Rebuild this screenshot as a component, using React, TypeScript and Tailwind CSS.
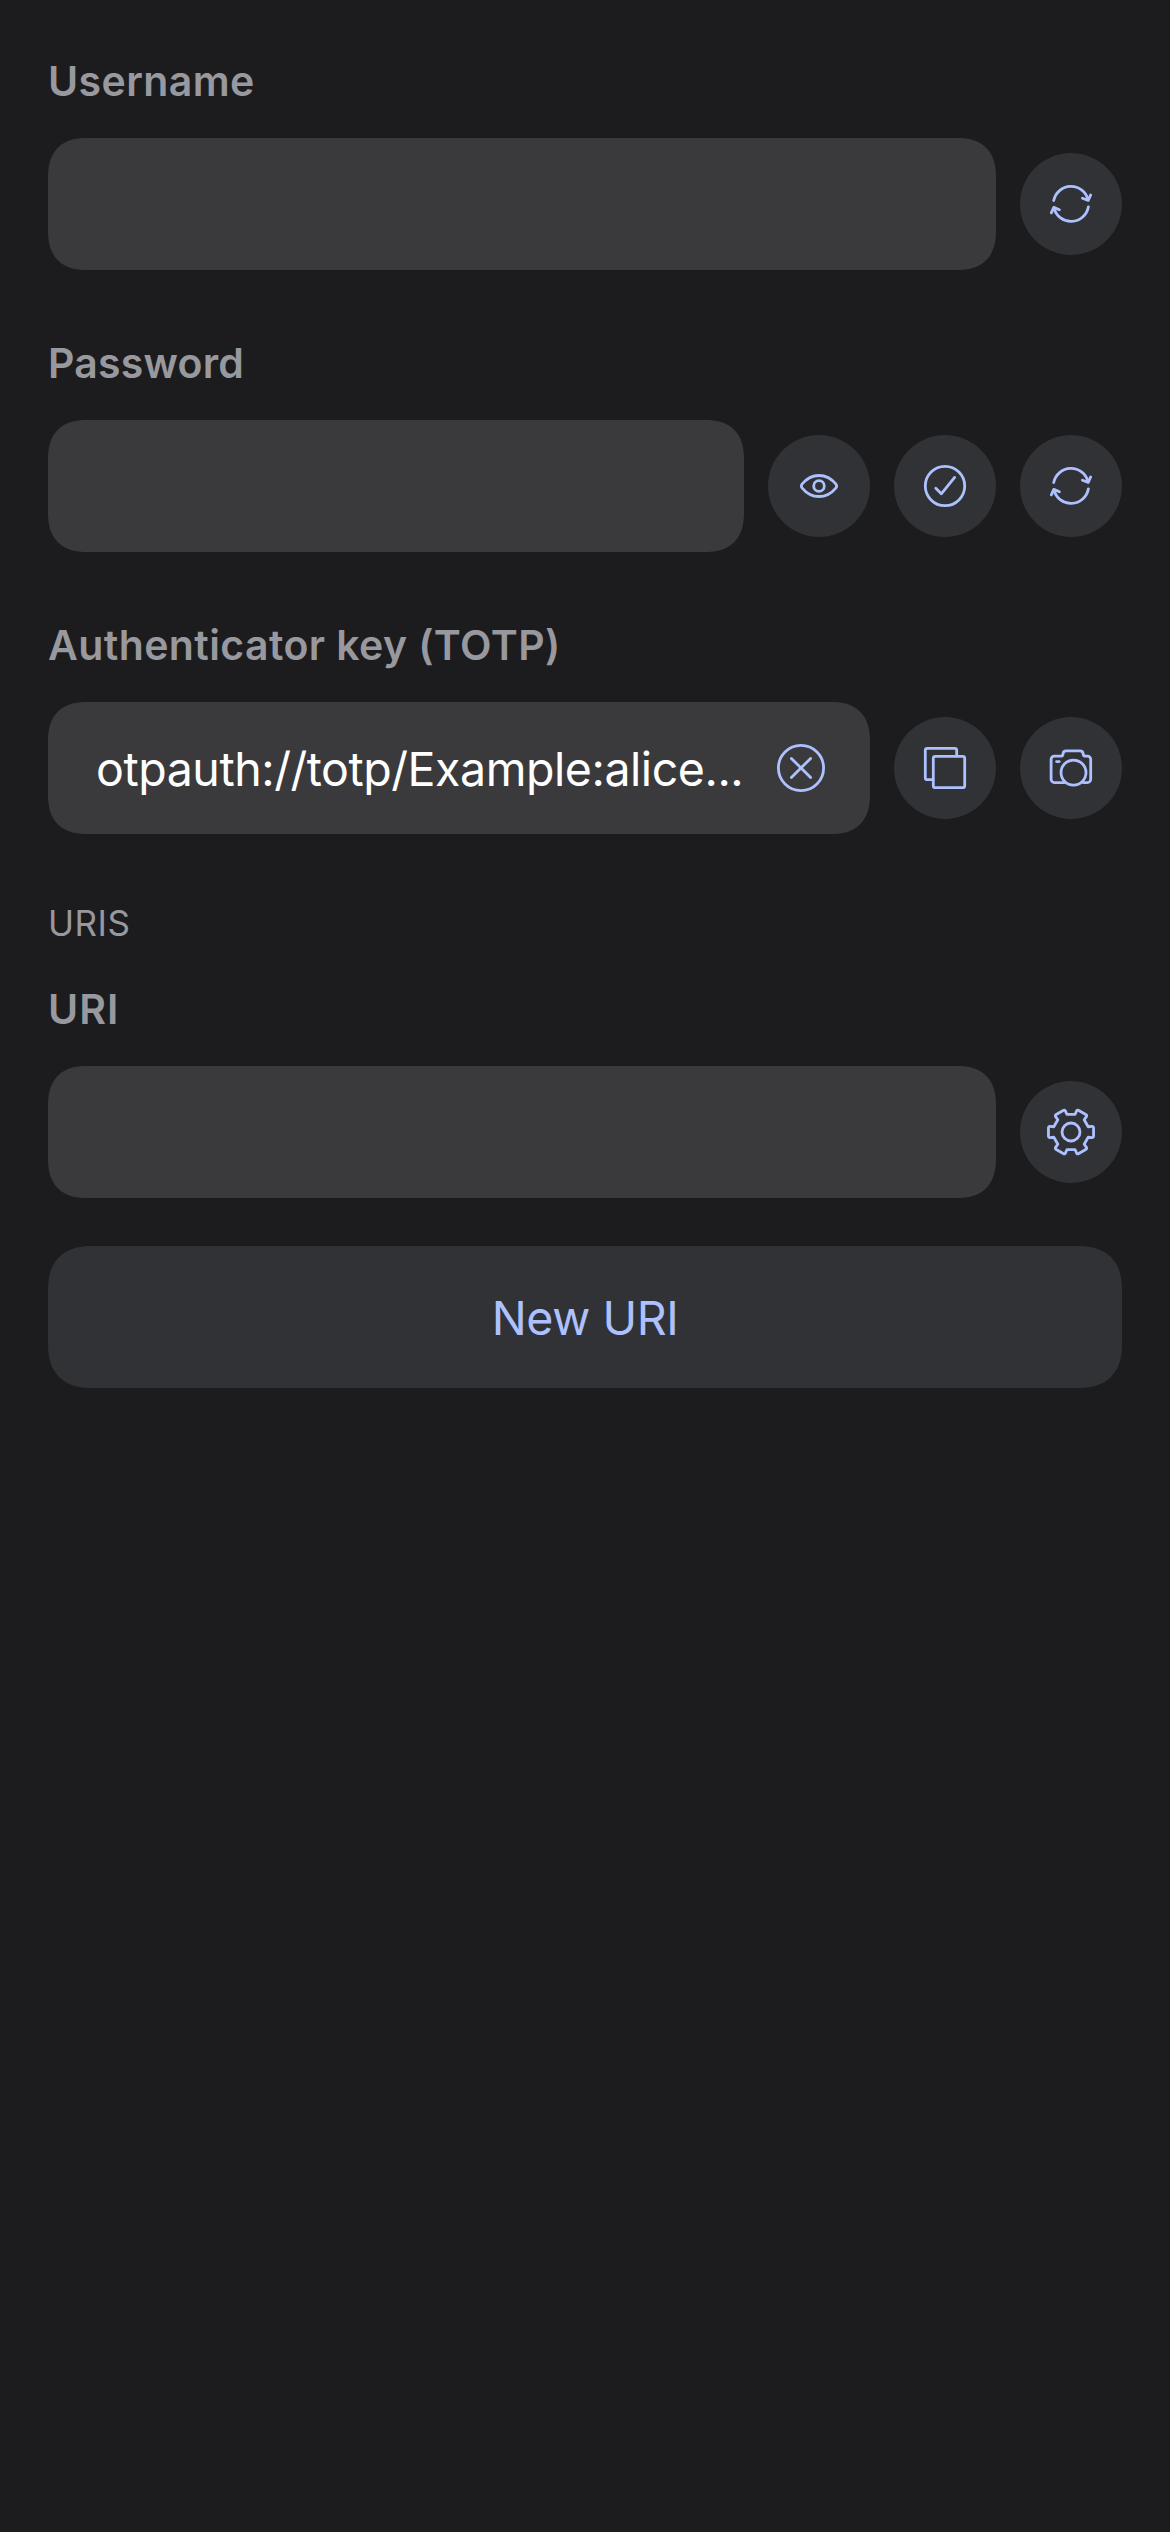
import type { ReactNode } from "react";

function gearPath(cx: number, cy: number) {
  const at = (r: number, deg: number) => {
    const a = (deg * Math.PI) / 180;
    return [cx + r * Math.cos(a), cy + r * Math.sin(a)];
  };
  const fmt = (p: number[]) => `${p[0].toFixed(2)} ${p[1].toFixed(2)}`;
  const mix = (a: number[], b: number[], d: number) => {
    const len = Math.hypot(b[0] - a[0], b[1] - a[1]);
    return [a[0] + ((b[0] - a[0]) * d) / len, a[1] + ((b[1] - a[1]) * d) / len];
  };
  let d = "";
  for (let i = 0; i < 6; i++) {
    const t = i * 60;
    const b1 = at(18, t - 17);
    const c1 = at(23.3, t - 14.5);
    const c2 = at(23.3, t + 14.5);
    const b2 = at(18, t + 17);
    d += `${i === 0 ? "M" : "L"}${fmt(b1)}`;
    d += `L${fmt(mix(c1, b1, 1.8))}Q${fmt(c1)} ${fmt(mix(c1, c2, 1.8))}`;
    d += `L${fmt(mix(c2, c1, 1.8))}Q${fmt(c2)} ${fmt(mix(c2, b2, 1.8))}`;
    d += `L${fmt(b2)}`;
  }
  return d + "Z";
}

function Glyph({ children }: { children: ReactNode }) {
  return (
    <svg
      viewBox="0 0 102 102"
      className="size-full"
      fill="none"
      stroke="currentColor"
      strokeWidth={2.8}
      strokeLinecap="round"
      strokeLinejoin="round"
    >
      {children}
    </svg>
  );
}

const RefreshIcon = () => (
  <Glyph>
    <path d="M33.7 47.6A17.6 17.6 0 0 1 68 46.6" />
    <path d="M62.4 45.2L68.2 47.4L70.7 41.9" />
    <path d="M68.4 53.8A17.6 17.6 0 0 1 34 55.2" />
    <path d="M31.3 59.9L33.8 54.4L39.4 56.7" />
  </Glyph>
);

const EyeIcon = () => (
  <Glyph>
    <path d="M34 49.2C38.4 43.8 44.4 40.5 51 40.5S63.6 43.8 68 49.2Q69.3 51 68 52.8C63.6 58.2 57.6 61.5 51 61.5S38.4 58.2 34 52.8Q32.7 51 34 49.2Z" />
    <circle cx="51" cy="51" r="5.3" />
  </Glyph>
);

const CheckIcon = () => (
  <Glyph>
    <circle cx="51" cy="51" r="19.7" />
    <path d="M41.8 53.2L47.3 58.8L60.6 42.4" />
  </Glyph>
);

const CopyIcon = () => (
  <Glyph>
    <rect x="39.3" y="39.3" width="31.4" height="31.4" rx="2" />
    <path d="M62.7 39V33.3a2 2 0 0 0-2-2H33.3a2 2 0 0 0-2 2V60.7a2 2 0 0 0 2 2H39" />
  </Glyph>
);

const CameraIcon = () => (
  <Glyph>
    <path d="M44.5 65.6H34.4a3.3 3.3 0 0 1-3.3-3.3V42.4a3.3 3.3 0 0 1 3.3-3.3H40.4Q43 39.1 43 36.9Q43.2 33.8 46.2 33.8H60Q63 33.8 63.2 36.9Q63.2 39.1 65.8 39.1H67.4a3.3 3.3 0 0 1 3.3 3.3V62.3a3.3 3.3 0 0 1-3.3 3.3H63.2" />
    <circle cx="53.5" cy="55.6" r="12.5" />
    <path d="M36.6 44.6H39.2" />
  </Glyph>
);

const GearIcon = () => (
  <Glyph>
    <circle cx="51" cy="51" r="9" />
    <path d={gearPath(51, 51)} />
  </Glyph>
);

function IconButton({ label, children }: { label: string; children: ReactNode }) {
  return (
    <button aria-label={label} className="size-[102px] shrink-0 rounded-full bg-[#313236] text-[#aec1ff]">
      {children}
    </button>
  );
}

function Field({
  label,
  spacing,
  children,
  actions,
}: {
  label: string;
  spacing: string;
  children?: ReactNode;
  actions: ReactNode;
}) {
  return (
    <section>
      <h2 className={`h-12 text-[41px] leading-[48px] font-semibold text-[#98989f] ${spacing}`}>{label}</h2>
      <div className="mt-[33px] flex items-center gap-6">
        <div className="flex h-[132px] min-w-0 flex-1 items-center rounded-[40px] bg-[#3a3a3c] pr-[45px] pl-12 [corner-shape:superellipse(1.3)]">
          {children}
        </div>
        {actions}
      </div>
    </section>
  );
}

export default function App() {
  return (
    <main className="flex min-h-[2532px] w-full flex-col bg-[#1c1c1e] px-12 pt-[57px] font-[Inter,sans-serif]">
      <div className="flex flex-col gap-[69px]">
        <Field
          label="Username"
          spacing="tracking-[0.4px]"
          actions={
            <IconButton label="Generate username">
              <RefreshIcon />
            </IconButton>
          }
        />
        <Field
          label="Password"
          spacing="tracking-[0.2px]"
          actions={
            <>
              <IconButton label="Show password">
                <EyeIcon />
              </IconButton>
              <IconButton label="Check password">
                <CheckIcon />
              </IconButton>
              <IconButton label="Generate password">
                <RefreshIcon />
              </IconButton>
            </>
          }
        />
        <Field
          label="Authenticator key (TOTP)"
          spacing="tracking-[0.4px]"
          actions={
            <>
              <IconButton label="Copy key">
                <CopyIcon />
              </IconButton>
              <IconButton label="Scan code">
                <CameraIcon />
              </IconButton>
            </>
          }
        >
          <span className="flex-1 pt-0.5 text-[46.5px] leading-[60px] tracking-[-0.45px] whitespace-nowrap text-white">
            otpauth://totp/Example:alice...
          </span>
          <button aria-label="Clear" className="size-12 shrink-0 text-[#aec1ff]">
            <svg viewBox="0 0 48 48" className="size-full" fill="none" stroke="currentColor" strokeWidth={2.8} strokeLinecap="round">
              <circle cx="24" cy="24" r="22.6" />
              <path d="M14.4 14.4L33.6 33.6M33.6 14.4L14.4 33.6" />
            </svg>
          </button>
        </Field>
      </div>
      <h3 className="mt-[68px] mb-[41px] text-[35px] leading-[42px] tracking-[0.5px] text-[#98989f]">URIS</h3>
      <Field
        label="URI"
        spacing="tracking-[1px]"
        actions={
          <IconButton label="URI options">
            <GearIcon />
          </IconButton>
        }
      />
      <button className="mt-12 h-[142px] rounded-[45px] bg-[#313236] pt-0.5 text-[46.5px] leading-[60px] tracking-[-0.4px] text-[#aec1ff] [corner-shape:superellipse(1.3)]">
        New URI
      </button>
    </main>
  );
}
